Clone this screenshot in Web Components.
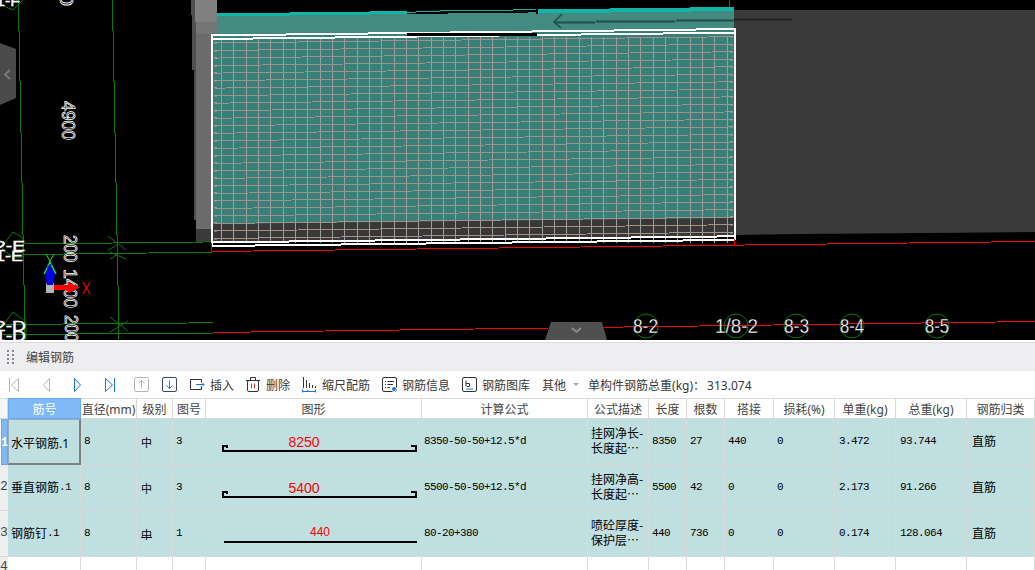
<!DOCTYPE html>
<html>
<head>
<meta charset="utf-8">
<style>
  html, body { margin: 0; padding: 0; background: #fff; overflow: hidden; }
  body { width: 1035px; height: 570px; font-family: "Noto Sans", "Noto Sans CJK SC", sans-serif; }
</style>
</head>
<body>
<cad-view></cad-view>
<rebar-panel></rebar-panel>

<script>
const CJK = '"Noto Sans", "Noto Sans CJK SC", sans-serif';

// stepped line, the way the 3d view draws a slightly tilted line
function steppedPath(x1, x2, y1, slope) {
  let d = '';
  let lastY = null;
  for (let x = x1; x <= x2; x++) {
    const y = Math.round(y1 + (x - x1) * slope) + 0.5;
    if (y !== lastY) {
      d += `M${x} ${y}`;
      lastY = y;
    } else {
      d += `L${x} ${y}`;
    }
  }
  return d;
}

function steppedBar(x1, x2, y1, slope, h, fill) {
  let out = '';
  let start = x1;
  let lastY = Math.round(y1);
  for (let x = x1; x <= x2; x++) {
    const y = Math.round(y1 + (x - x1) * slope);
    if (y !== lastY || x === x2) {
      out += `<rect x="${start}" y="${lastY}" width="${x - start}" height="${h}" fill="${fill}"/>`;
      start = x;
      lastY = y;
    }
  }
  return out;
}

class CadView extends HTMLElement {
  constructor() {
    super();
    this.attachShadow({ mode: 'open' });

    let horiz = '';
    for (let i = 0; i < 27; i++) {
      horiz += steppedPath(216, 732, 42.5 + i * 7.52, -0.0122);
    }
    let vert = '';
    for (let i = 0; i < 42; i++) {
      const x = Math.round(221 + i * 12.33) + 0.5;
      vert += `M${x} 37V243`;
    }
    let ticks = '';
    for (let i = 0; i < 27; i++) {
      const yl = Math.round(42 + i * 7.52);
      const yr = Math.round(36 + i * 7.52);
      ticks += `<rect x="214" y="${yl}" width="3" height="1.5" fill="#a39a96"/>`;
      ticks += `<rect x="730" y="${yr}" width="3" height="1.5" fill="#a39a96"/>`;
    }

    const bubbles = [
      [646, 326, '8-2', 633, 25], [796, 326, '8-3', 784, 25],
      [852, 326, '8-4', 840, 24], [937, 326, '8-5', 925, 24]
    ].map(([cx, cy, t, tx, w]) =>
      `<circle cx="${cx}" cy="${cy}" r="12" fill="none" stroke="#0b7a0b"/>
       <text class="axis" x="${tx}" y="333" textLength="${w}" lengthAdjust="spacingAndGlyphs">${t}</text>`
    ).join('');

    this.shadowRoot.innerHTML = `
      <style>
        :host { display: block; width: 1035px; height: 340px; background: #000; overflow: hidden; }
        svg { display: block; }
        text { font-family: "Liberation Sans", sans-serif; }
        .axis { font-size: 21px; fill: #fff; stroke: #000; stroke-width: .3; }
        .lab { font-size: 15px; fill: #fff; stroke: #fff; stroke-width: .4; }
        .dim { font-size: 18px; fill: none; stroke: #fff; stroke-width: .75; }
      </style>
      <svg width="1035" height="340" viewBox="0 0 1035 340">
        <!-- right hand wall -->
        <path d="M734 10H1035V232L800 234L734 235Z" fill="#3a3a3a"/>

        <!-- column on the left -->
        <rect x="191" y="0" width="5" height="15" fill="#4f4f4f"/>
        <rect x="192" y="15" width="4" height="55" fill="#505050"/>
        <rect x="194" y="70" width="2" height="150" fill="#4a4a4a"/>
        <rect x="195" y="0" width="22" height="22" fill="#808080"/>
        <rect x="196" y="22" width="21" height="12" fill="#747474"/>
        <rect x="196" y="34" width="16" height="195" fill="#6b6b6b"/>
        <rect x="212" y="34" width="6" height="195" fill="#6e6e6e"/>
        <rect x="196" y="229" width="16" height="13" fill="#3a3a3a"/>

        <!-- wall face -->
        <path d="M217 16L734 9V36L217 40Z" fill="#438a81"/>
        <path d="M213 36L734 29V219L213 225Z" fill="#387f78"/>
        <path d="M213 224L734 218V236L213 242Z" fill="#393737"/>
        ${steppedBar(217, 407, 13.4, -0.0125, 3, '#0fb5a6')}
        ${steppedBar(407, 440, 11.6, -0.0125, 1, '#0fb5a6')}
        ${steppedBar(440, 537, 10.4, -0.0125, 1, '#0fb5a6')}
        ${steppedBar(537, 734, 9.4, -0.0125, 4, '#0fb5a6')}
        ${steppedBar(407, 537, 13, -0.0125, 1, '#000')}
        <rect x="536" y="9" width="2" height="5" fill="#000"/>

        <!-- mesh -->
        <path d="${vert}" stroke="#96a09c" fill="none" stroke-width="1"/>
        <path d="${horiz}" stroke="#a68f88" fill="none" stroke-width="1"/>
        ${ticks}

        <!-- white outline -->
        ${steppedBar(212, 735, 34.4, -0.0122, 2, '#fff')}
        ${steppedBar(212, 735, 38, -0.0122, 2, '#fff')}
        ${steppedBar(407, 537, 32.6, 0, 3, '#000')}
        ${steppedBar(212, 735, 241.4, -0.0117, 2, '#fff')}
        ${steppedBar(212, 735, 245, -0.0117, 2, '#fff')}
        <rect x="211" y="34" width="2" height="212" fill="#fff"/>
        <rect x="734" y="28" width="2" height="212" fill="#fff"/>

        <!-- arrow on the wall -->
        <g fill="none" stroke="#1f4f4a">
          <path d="${steppedPath(555, 734, 22, -0.0125)}" stroke-width="2"/>
          <path d="M562 14L554 22L561 28" stroke-width="1.6"/>
        </g>
        <path d="${steppedPath(734, 792, 19, 0)}" stroke="#222" stroke-width="2" fill="none"/>
        <rect x="729" y="0" width="1" height="7" fill="#f00"/>

        <!-- axes -->
        <g fill="none" stroke="#0a7a0a">
          <path d="M18.5 0V31H19.5V81H20.5V133H21.5V183H22.5V235H23.5V285H24.5V340"/>
          <path d="M112.5 0V31H113.5V81H114.5V133H115.5V183H116.5V235H117.5V285H118.5V340"/>
          <path d="${steppedPath(22, 211, 243.5, -0.011)}"/>
          <path d="${steppedPath(22, 212, 254, -0.012)}"/>
          <path d="${steppedPath(0, 213, 324, -0.008)}"/>
          <path d="${steppedPath(0, 213, 334, -0.007)}"/>
          <path d="M108 236L126 250M108 250L117 245M110 252L126 259M110 259L118 254M110 317L128 331M110 332L128 321"/>
          <path d="M3 245L13 232L23 238V257L13 257L3 250Z M23 0L13 10L2 5"/>
          <path d="M0 330L13 312L26 322V340"/>
        </g>

        <!-- dimension text -->
        <text class="dim" transform="translate(62 101) rotate(90)" textLength="39" lengthAdjust="spacingAndGlyphs">4900</text>
        <text class="dim" transform="translate(60 -7) rotate(90)" textLength="13" lengthAdjust="spacingAndGlyphs">0</text>
        <text class="dim" transform="translate(64 235) rotate(90)" textLength="27" lengthAdjust="spacingAndGlyphs">200</text>
        <text class="dim" transform="translate(64 269) rotate(90)" textLength="39" lengthAdjust="spacingAndGlyphs">1400</text>
        <text class="dim" transform="translate(65 315) rotate(90)" textLength="27" lengthAdjust="spacingAndGlyphs">200</text>

        <!-- axis labels -->
        <text class="lab" x="-4" y="6" textLength="24" lengthAdjust="spacingAndGlyphs">1-F</text>
        <text class="lab" x="-5" y="251" textLength="30" lengthAdjust="spacingAndGlyphs">2-E</text>
        <text class="lab" x="-5" y="261" textLength="28" lengthAdjust="spacingAndGlyphs">1-E</text>
        <text class="lab" x="-5" y="331" textLength="31" lengthAdjust="spacingAndGlyphs">2-D</text>
        <text class="lab" x="-5" y="341" textLength="31" lengthAdjust="spacingAndGlyphs">1-D</text>

        <!-- red lines -->
        <path d="${steppedPath(212, 1035, 251, -0.0122)}" stroke="#f00" fill="none"/>
        <path d="${steppedPath(213, 1035, 332, -0.0134)}" stroke="#f00" fill="none"/>
        <rect x="211" y="243" width="1" height="8" fill="#f00"/>
        <rect x="734" y="239" width="1" height="6" fill="#f00"/>

        <!-- grid bubbles -->
        ${bubbles}
        <circle cx="736" cy="326" r="12" fill="none" stroke="#0b7a0b"/>
        <text class="axis" x="715" y="333" textLength="43" lengthAdjust="spacingAndGlyphs">1/8-2</text>

        <!-- origin marker -->
        <rect x="46" y="283" width="8" height="10" fill="#b5b5b5"/>
        <path d="M50 260L55 274L53 285H47L45 274Z" fill="#0000e6"/>
        <path d="M44 274L50 262L56 274" fill="none" stroke="#19e619" stroke-width="1.5"/>
        <path d="M46 254L50 261L54 254" fill="none" stroke="#19e619"/>
        <path d="M46 268L54 262" stroke="#0000e6" fill="none"/>
        <rect x="54" y="285" width="16" height="5" fill="#f00"/>
        <path d="M68 282L80 287.5L68 293Z" fill="#f00"/>
        <path d="M83 282L90 294M90 282L83 294" stroke="#f00" fill="none" stroke-width="1.2"/>

        <!-- collapse tabs -->
        <path d="M0 43L16 49V98L0 105Z" fill="#4a4a4a"/>
        <path d="M10 70L5 74.5L10 79" stroke="#7a7a7a" stroke-width="2" fill="none"/>
        <path d="M551 322H602L607 340H545Z" fill="#505050"/>
        <path d="M572 328L576.5 332L581 328" stroke="#8a8a8a" stroke-width="2" fill="none"/>
      </svg>`;
  }
}

class PanelTitle extends HTMLElement {
  constructor() {
    super();
    this.attachShadow({ mode: 'open' });
    this.shadowRoot.innerHTML = `
      <style>
        :host {
          display: flex; align-items: center; height: 28px; box-sizing: border-box;
          background: #eeeef0; padding-left: 7px; color: #444; font-size: 12px;
        }
        .grip {
          display: grid; grid-template-columns: 2px 2px; grid-auto-rows: 2px;
          column-gap: 3px; row-gap: 2px; margin-right: 12px;
        }
        .grip i { background: #888; }
      </style>
      <div class="grip"><i></i><i></i><i></i><i></i><i></i><i></i><i></i><i></i></div>
      <slot></slot>`;
  }
}

class ToolBtn extends HTMLElement {
  constructor() {
    super();
    this.attachShadow({ mode: 'open' });
    this.shadowRoot.innerHTML = `
      <style>
        :host { display: flex; align-items: center; gap: 5px; height: 100%; white-space: nowrap; }
        ::slotted(svg) { display: block; flex: none; }
      </style>
      <slot name="icon"></slot><slot></slot>`;
  }
}

class RebarToolbar extends HTMLElement {
  constructor() {
    super();
    this.attachShadow({ mode: 'open' });
    this.shadowRoot.innerHTML = `
      <style>
        :host {
          display: flex; align-items: center; height: 27px; box-sizing: border-box;
          padding-left: 9px; background: #fff; color: #3a3a3a; font-size: 12px;
        }
      </style>
      <slot></slot>`;
  }
}

const COLS = [
  ['筋号', 73], ['直径(mm)', 56], ['级别', 36], ['图号', 33], ['图形', 216],
  ['计算公式', 166], ['公式描述', 61], ['长度', 38], ['根数', 38], ['搭接', 49],
  ['损耗(%)', 61], ['单重(kg)', 61], ['总重(kg)', 71], ['钢筋归类', 68]
];

const ROWS = [
  { name: '水平钢筋', suffix: '.1', d: '8', fig: '3', len: '8250', hook: true, textX: 98,
    formula: '8350-50-50+12.5*d', desc: ['挂网净长-', '长度起…'], l: '8350', n: '27',
    lap: '440', loss: '0', unit: '3.472', total: '93.744', kind: '直筋' },
  { name: '垂直钢筋', suffix: '.1', d: '8', fig: '3', len: '5400', hook: true, textX: 98,
    formula: '5500-50-50+12.5*d', desc: ['挂网净高-', '长度起…'], l: '5500', n: '42',
    lap: '0', loss: '0', unit: '2.173', total: '91.266', kind: '直筋' },
  { name: '钢筋钉', suffix: '.1', d: '8', fig: '1', len: '440', hook: false, textX: 114,
    formula: '80-20+380', desc: ['喷砼厚度-', '保护层…'], l: '440', n: '736',
    lap: '0', loss: '0', unit: '0.174', total: '128.064', kind: '直筋' }
];

class RebarShape extends HTMLElement {
  constructor() {
    super();
    this.attachShadow({ mode: 'open' });
    const len = this.getAttribute('len');
    const x = this.getAttribute('tx');
    const hook = this.hasAttribute('hook');
    const bar = hook
      ? '<path d="M21 29V27H17V32H210V27H205" fill="none" stroke="#000" stroke-width="2"/>'
      : '<path d="M18 31H211" fill="none" stroke="#000" stroke-width="2"/>';
    this.shadowRoot.innerHTML = `
      <style>
        :host { display: block; width: 100%; height: 100%; }
        svg { display: block; overflow: visible; }
        text { font-family: "Liberation Sans", sans-serif; fill: #f00; text-anchor: middle; }
      </style>
      <svg width="215" height="45" viewBox="0 0 215 45">
        <text x="${x}" y="${hook ? 28 : 25}" font-size="${hook ? 14 : 12}">${len}</text>
        ${bar}
      </svg>`;
  }
}

class RebarGrid extends HTMLElement {
  constructor() {
    super();
    this.attachShadow({ mode: 'open' });
    const tracks = '8px ' + COLS.map(c => c[1] + 'px').join(' ');
    const head = '<div class="hd corner"></div>' + COLS.map((c, i) =>
      `<div class="hd${i === 0 ? ' on' : ''}">${c[0]}</div>`).join('');
    const body = ROWS.map((r, i) => `
      <div class="rn${i === 0 ? ' on' : ''}">${i + 1}</div>
      <div class="c name${i === 0 ? ' sel' : ''}">${r.name}<span class="${i === 0 ? '' : 'mono'}">${r.suffix}</span></div>
      <div class="c num">${r.d}</div>
      <div class="c grade">${i === 2 ? '<span class="g3">中</span>' : '中'}</div>
      <div class="c num">${r.fig}</div>
      <div class="c fig"><rebar-shape len="${r.len}" tx="${r.textX}" ${r.hook ? 'hook' : ''}></rebar-shape></div>
      <div class="c num formula">${r.formula}</div>
      <div class="c desc">${r.desc.join('<br>')}</div>
      <div class="c num">${r.l}</div>
      <div class="c num">${r.n}</div>
      <div class="c num">${r.lap}</div>
      <div class="c num">${r.loss}</div>
      <div class="c num wide">${r.unit}</div>
      <div class="c num wide">${r.total}</div>
      <div class="c kind">${r.kind}</div>`).join('');
    const empty = '<div class="rn last">4</div>' + COLS.map(() => '<div class="e"></div>').join('');
    this.shadowRoot.innerHTML = `
      <style>
        :host {
          display: grid; grid-template-columns: ${tracks};
          grid-template-rows: 21px 46px 46px 46px 20px;
          font-family: ${CJK}; font-size: 12px; color: #444;
          background: #fff; width: 1035px; overflow: hidden;
        }
        div { box-sizing: border-box; border-right: 1px solid #d9d9d9; border-bottom: 1px solid #d9d9d9; }
        .hd { display: flex; align-items: center; justify-content: center; white-space: nowrap; background: #fff; border-top: 1px solid #d9d9d9; }
        .hd.on { background: #7fb9f8; color: #fff; border: 1px solid #66a8f2; }
        .corner { background: #f6f6f6; }
        .rn {
          background: #eee; color: #445; font: 13px/44px "Liberation Mono", monospace;
          overflow: hidden; text-align: center; border-right: 0;
        }
        .rn.on {
          background: #7fb9f8; color: #fff; font-weight: bold; font-size: 12px; line-height: 48px;
          margin-left: 1px; border: 0; box-shadow: inset 0 0 0 1px #66a8f2;
        }
        .rn.last { line-height: 20px; }
        .c {
          background: #c0dfe1; color: #000; display: flex; align-items: center;
          padding-left: 3px; padding-bottom: 2px; white-space: nowrap; overflow: hidden;
        }
        .num { font: 11px "Liberation Mono", monospace; letter-spacing: -.6px; }
        .formula { padding-left: 2px; }
        .wide { padding-left: 4px; }
        .name { font: 12px "Noto Sans CJK SC", sans-serif; }
        .mono { font: 11px "Liberation Mono", monospace; letter-spacing: -.6px; }
        .name.sel {
          font-family: ${CJK};
          border: 2px solid #808080; border-top: 1px solid #9ab; border-left: 1px solid #9ab;
          padding-left: 2px; padding-bottom: 0; padding-top: 3px;
        }
        .grade { font: 11px "Noto Sans CJK SC", sans-serif; padding-left: 4px; padding-bottom: 0; }
        .g3 { text-decoration: underline; text-underline-offset: -2px; }
        .desc { font: 12px/15px "Noto Sans CJK SC", sans-serif; align-items: flex-start; padding-top: 6px; padding-bottom: 0; }
        .kind { font: 12px "Noto Sans CJK SC", sans-serif; padding-left: 5px; }
        .fig { padding: 0; display: block; }
        .e { background: #fff; }
      </style>
      ${head}${body}${empty}`;
  }
}

class RebarPanel extends HTMLElement {
  constructor() {
    super();
    this.attachShadow({ mode: 'open' });
    const gray = '#b5b5b5', blue = '#1a73e8', dark = '#3c4858';
    this.shadowRoot.innerHTML = `
      <style>
        :host { display: block; background: #fff; padding-top: 2px; }
        .line { height: 1px; background: #dcdcdc; }
        tool-btn { margin-right: 12px; }
        .nav { margin-right: 0; }
        .gap6 { gap: 6px; }
        .other { margin-right: 0; gap: 7px; }
        .caret { width: 0; height: 0; border: 3px solid transparent; border-top-color: #aaa; border-bottom: 0; }
        .sum { margin: 0 0 0 9px; }
        .sum b { font-weight: normal; margin-left: 2px; }
      </style>
      <div class="line"></div>
      <panel-title>编辑钢筋</panel-title>
      <rebar-toolbar>
        <tool-btn class="nav" style="width:34px"><svg slot="icon" width="10" height="14" viewBox="0 0 10 14" fill="none" stroke="${gray}"><path d="M.5 0V14M9.5 .5V13.5L2.5 7Z"/></svg></tool-btn>
        <tool-btn class="nav" style="width:31px"><svg slot="icon" width="7" height="14" viewBox="0 0 7 14" fill="none" stroke="${gray}"><path d="M6.5 .5V13.5L.5 7Z"/></svg></tool-btn>
        <tool-btn class="nav" style="width:31px"><svg slot="icon" width="7" height="14" viewBox="0 0 7 14" fill="none" stroke="${blue}"><path d="M.5 .5V13.5L6.5 7Z"/></svg></tool-btn>
        <tool-btn class="nav" style="width:29px"><svg slot="icon" width="10" height="14" viewBox="0 0 10 14" fill="none" stroke="${blue}"><path d="M9.5 0V14M.5 .5V13.5L7.5 7Z"/></svg></tool-btn>
        <tool-btn class="nav" style="width:28px"><svg slot="icon" width="15" height="15" viewBox="0 0 15 15" fill="none" stroke="${gray}"><rect x=".5" y=".5" width="14" height="14" rx="1.5"/><path d="M7.5 11.5V4M4.5 6.5L7.5 3.5L10.5 6.5"/></svg></tool-btn>
        <tool-btn class="nav" style="width:28px"><svg slot="icon" width="15" height="15" viewBox="0 0 15 15" fill="none" stroke="${dark}"><rect x=".5" y=".5" width="14" height="14" rx="1.5"/><path d="M7.5 3.5V11" stroke="${blue}"/><path d="M4.5 8.5L7.5 11.5L10.5 8.5" stroke="${blue}"/></svg></tool-btn>
        <tool-btn><svg slot="icon" width="15" height="11" viewBox="0 0 15 11" fill="none" stroke="#333"><path d="M11.5 3.5V.5H.5V10.5H11.5V7.5"/><path d="M6 5.5H14M12 3.5L14 5.5L12 7.5" stroke="${blue}"/></svg>插入</tool-btn>
        <tool-btn class="gap6"><svg slot="icon" width="14" height="15" viewBox="0 0 14 15" fill="none" stroke="#333"><path d="M0 3.5H14M4.5 3V.5H9.5V3"/><rect x="1.5" y="3.5" width="11" height="11" rx="1.5"/><path d="M5.5 6.5V11.5M8.5 6.5V11.5" stroke="#e53935"/></svg>删除</tool-btn>
        <tool-btn class="gap6"><svg slot="icon" width="14" height="16" viewBox="0 0 14 16" fill="none" stroke="#333"><path d="M1.5 0V11M4.5 3V11M7.5 6V11M10.5 8V11M13.5 9V11"/><path d="M.5 14.5H13.5M.5 12.5V15.5M13.5 12.5V15.5M5.5 13V15" stroke="${blue}"/></svg>缩尺配筋</tool-btn>
        <tool-btn><svg slot="icon" width="15" height="15" viewBox="0 0 15 15" fill="none" stroke="#333"><rect x=".5" y=".5" width="14" height="14" rx="1.5"/><path d="M3 4.5H4M5.5 4.5H12M3 7.5H4M5.5 7.5H11M3 10.5H4M5.5 10.5H8"/><circle cx="12" cy="12" r="2.5" fill="${blue}" stroke="#fff"/></svg>钢筋信息</tool-btn>
        <tool-btn><svg slot="icon" width="15" height="15" viewBox="0 0 15 15" fill="none" stroke="#333"><rect x=".5" y=".5" width="14" height="14" rx="1.5"/><path d="M4 3.5V9.5M4 6.5H7.5V9.5H5"/><path d="M4 12H11" stroke="${blue}"/></svg>钢筋图库</tool-btn>
        <tool-btn class="other">其他<span class="caret"></span></tool-btn>
        <tool-btn class="sum"><span>单构件钢筋总重(kg)：<b>313.074</b></span></tool-btn>
      </rebar-toolbar>
      <rebar-grid></rebar-grid>`;
  }
}

customElements.define('cad-view', CadView);
customElements.define('panel-title', PanelTitle);
customElements.define('tool-btn', ToolBtn);
customElements.define('rebar-toolbar', RebarToolbar);
customElements.define('rebar-shape', RebarShape);
customElements.define('rebar-grid', RebarGrid);
customElements.define('rebar-panel', RebarPanel);
</script>
</body>
</html>
